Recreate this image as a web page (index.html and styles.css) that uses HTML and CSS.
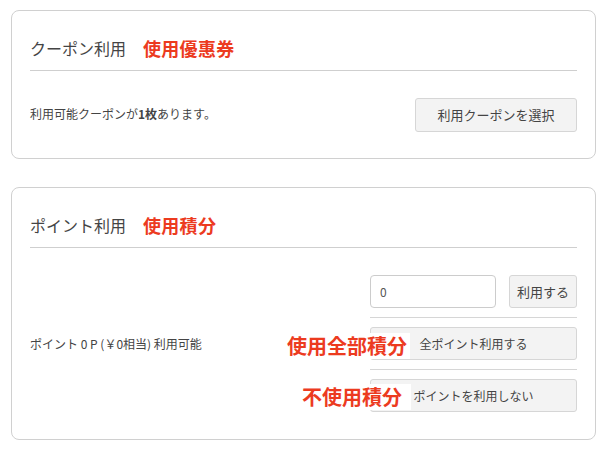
FILE: index.html
```html
<!DOCTYPE html>
<html lang="ja">
<head>
    <meta charset="UTF-8">
    <title>クーポン・ポイント利用</title>
    <link rel="stylesheet" href="styles.css">
</head>
<body>
    <div class="wrap">
        <!-- クーポン -->
        <div class="card">
            <div class="card-head">
                <span class="title">クーポン利用</span>
                <b class="note">使用優惠券</b>
            </div>
            <div class="card-body">
                <div class="info">利用可能クーポンが<b>1枚</b>あります。</div>
                <button class="btn btn-coupon">利用クーポンを選択</button>
            </div>
        </div>

        <!-- ポイント -->
        <div class="card">
            <div class="card-head">
                <span class="title">ポイント利用</span>
                <b class="note">使用積分</b>
            </div>
            <div class="card-body">
                <div class="info">ポイント 0 P (￥0相当) 利用可能</div>
                <div class="point-box">
                    <div class="point-row">
                        <input class="point-input" type="text" value="0">
                        <button class="btn btn-use">利用する</button>
                    </div>
                    <div class="point-row line">
                        <button class="btn btn-wide">全ポイント利用する</button>
                        <b class="note over over-all">使用全部積分</b>
                    </div>
                    <div class="point-row line">
                        <button class="btn btn-wide">ポイントを利用しない</button>
                        <b class="note over over-none">不使用積分</b>
                    </div>
                </div>
            </div>
        </div>
    </div>
</body>
</html>
```
FILE: styles.css
```css
body{
    margin: 0;
    background-color: #fff;
    font-family: "Noto Sans CJK JP", "Noto Sans", sans-serif;
    color: #333;
}

.wrap{
    padding: 10px 13px 0 11px;
}

.card{
    width: 585px;
    box-sizing: border-box;
    border: 1px solid #d0d0d0;
    border-radius: 8px;
    padding: 0 18px;
    margin-bottom: 28px;
}

.card-head{
    display: flex;
    align-items: center;
    height: 22px;
    padding-top: 26px;
    padding-bottom: 11px;
    border-bottom: 1px solid #cfcfcf;
}

.title{
    font-size: 16px;
    line-height: 22px;
    color: #444;
    margin-right: 17px;
}

.note{
    font-size: 18px;
    line-height: 22px;
    color: #ec3b1f;
    letter-spacing: 0.3px;
}

.card-body{
    display: flex;
    justify-content: space-between;
    align-items: center;
    padding: 27px 0 26px;
}
.card:last-child .card-body{
    padding-bottom: 27px;
}

.info{
    font-size: 12px;
    line-height: 18px;
    color: #444;
}
.card:first-child .info{
    margin-top: -3px;
}

.btn{
    font-family: inherit;
    font-size: 13px;
    line-height: 18px;
    color: #444;
    background-color: #f3f3f3;
    border: 1px solid #d6d6d6;
    border-radius: 3px;
    padding: 0;
    height: 34px;
}

.btn-coupon{
    width: 162px;
}

.point-box{
    width: 207px;
}

.point-row{
    position: relative;
    display: flex;
    justify-content: space-between;
}
.point-row.line{
    margin-top: 9px;
    padding-top: 9px;
    border-top: 1px solid #d6d6d6;
}

.point-input{
    width: 126px;
    height: 33px;
    box-sizing: border-box;
    border: 1px solid #ccc;
    border-radius: 4px;
    padding: 0 9px;
    font-family: inherit;
    font-size: 12px;
    color: #555;
}

.btn-use{
    width: 68px;
    height: 33px;
}

.btn-wide{
    width: 207px;
    height: 33px;
    font-size: 12px;
}

.over{
    position: absolute;
    background-color: #fff;
    font-size: 20px;
    line-height: 26px;
    letter-spacing: 0;
}
.over-all{
    top: 15px;
    left: -83px;
    padding-right: 3px;
}
.over-none{
    top: 14px;
    left: -68px;
    padding-right: 9px;
}
```
